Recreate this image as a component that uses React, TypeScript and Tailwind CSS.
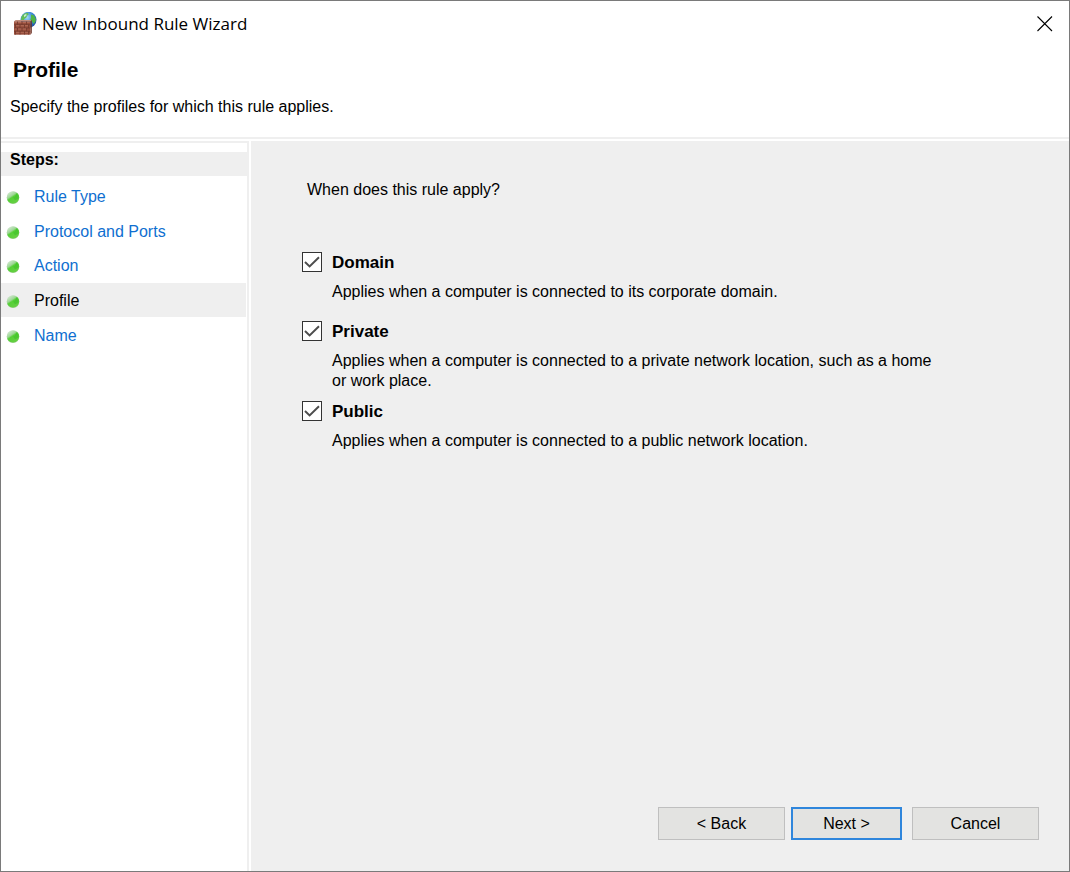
import { useState } from "react";

const steps = ["Rule Type", "Protocol and Ports", "Action", "Profile", "Name"];
const currentStep = "Profile";

const profiles = [
  {
    id: "domain",
    name: "Domain",
    description: "Applies when a computer is connected to its corporate domain.",
    spacing: "mb-[19px]",
  },
  {
    id: "private",
    name: "Private",
    description:
      "Applies when a computer is connected to a private network location, such as a home or work place.",
    spacing: "mb-[10px]",
  },
  {
    id: "public",
    name: "Public",
    description: "Applies when a computer is connected to a public network location.",
    spacing: "",
  },
];

function FirewallIcon() {
  return (
    <svg width="24" height="24" viewBox="0 0 24 24" aria-hidden="true">
      <defs>
        <radialGradient id="globe" cx="0.4" cy="0.35" r="0.7">
          <stop offset="0" stopColor="#a5dcf8" />
          <stop offset="0.55" stopColor="#3b8ad8" />
          <stop offset="1" stopColor="#1d4c9c" />
        </radialGradient>
      </defs>
      <circle cx="15.5" cy="7.8" r="8" fill="url(#globe)" />
      <path d="M8.4 5C9.6 2.4 12 1 14.5 0.8L15.8 2.2 14 3.8 13.4 5.4 11.5 6.8 10.5 8.4 8 8.4Z" fill="#62bf55" />
      <path d="M18 2.6L20.8 3.2 22.6 6.2 22.8 9 20.8 12 19 9.6 17.4 8 18 5.6Z" fill="#4fb545" />
      <path d="M11 3L13.4 1.8 13.4 3.8 11 5.2Z" fill="#c4ecd0" />
      <path d="M1 9.4L2.6 8H18.8L17.4 9.4Z" fill="#c18d7c" />
      <path d="M17.4 9.4L18.8 8V21L17.4 22.7Z" fill="#6a3226" />
      <rect x="1" y="9.4" width="16.4" height="13.3" fill="#984e3c" />
      <path
        d="M1 12.7H17.4M1 16H17.4M1 19.3H17.4M4.5 9.4V12.7M9 9.4V12.7M13.5 9.4V12.7M2.5 12.7V16M7 12.7V16M11.5 12.7V16M15.5 12.7V16M4.5 16V19.3M9 16V19.3M13.5 16V19.3M2.5 19.3V22.7M7 19.3V22.7M11.5 19.3V22.7M15.5 19.3V22.7"
        stroke="#6a3428"
        strokeWidth="0.6"
      />
      <path
        d="M1.5 10.4H4M5 10.4H8.5M9.6 10.4H13M14 10.4H16.8M3 13.7H6.5M7.6 13.7H11M12 13.7H15M1.5 17H4M5 17H8.5M9.6 17H13M3 20.3H6.5M7.6 20.3H11M12 20.3H15"
        stroke="#bd7a67"
        strokeWidth="0.7"
      />
    </svg>
  );
}

function StepBullet() {
  return (
    <svg width="14" height="14" viewBox="0 0 14 14" className="shrink-0" aria-hidden="true">
      <defs>
        <linearGradient id="bullet" x1="0.1" y1="0" x2="0.7" y2="0.9">
          <stop offset="0" stopColor="#dcefdc" />
          <stop offset="0.42" stopColor="#a0d698" />
          <stop offset="0.55" stopColor="#55d036" />
          <stop offset="1" stopColor="#66cf44" />
        </linearGradient>
      </defs>
      <circle cx="7" cy="7.8" r="6.3" fill="#b9c2b9" opacity="0.5" />
      <circle cx="7" cy="7.5" r="6.2" fill="url(#bullet)" />
      <path d="M7 7.6C9 7.2 10 5.6 10.4 3L12.6 5.8 12.4 8.8 9 10.2Z" fill="#3fc02c" opacity="0.6" />
    </svg>
  );
}

function WizardButton({ label, className }: { label: string; className: string }) {
  return (
    <button type="button" className={`h-[33px] bg-[#e3e3e1] text-base text-black ${className}`}>
      {label}
    </button>
  );
}

export default function App() {
  const [checked, setChecked] = useState<Record<string, boolean>>({
    domain: true,
    private: true,
    public: true,
  });

  return (
    <div className="flex min-h-screen flex-col border border-[#7a7a7a] bg-white font-['Liberation_Sans',Arial,sans-serif] text-base text-black">
      <header className="border-b-2 border-[#efefef]">
        <div className="flex h-[46px] items-center pr-4 pl-3">
          <FirewallIcon />
          <span className="ml-[5px] flex-1 font-['Open_Sans','Noto_Sans',sans-serif] text-[17px] leading-6">
            New Inbound Rule Wizard
          </span>
          <button type="button" aria-label="Close" className="flex size-4 items-center justify-center">
            <svg width="16" height="16" viewBox="0 0 16 16" aria-hidden="true">
              <path d="M0.5 0.5L15 15M15 0.5L0.5 15" stroke="#000" strokeWidth="1.1" />
            </svg>
          </button>
        </div>
        <h1 className="pt-[11px] pl-3 text-[21px] leading-6 font-bold">Profile</h1>
        <p className="pt-[15px] pb-5 pl-[9px] leading-5">Specify the profiles for which this rule applies.</p>
      </header>

      <div className="flex flex-1 gap-[2px] pt-[2px]">
        <nav aria-label="Steps" className="w-[248px] shrink-0 border-t-2 border-r-2 border-[#efefef]">
          <h2 className="mt-[9px] flex h-6 items-center bg-[#efefef] pb-2 pl-[9px] font-bold">Steps:</h2>
          <ul className="mt-[3px] grid h-[173px] grid-rows-5">
            {steps.map((step) => {
              const active = step === currentStep;
              return (
                <li key={step} className={active ? "mr-px flex bg-[#efefef]" : "mr-px flex"}>
                  <a
                    href="#"
                    aria-current={active ? "step" : undefined}
                    className={`flex flex-1 items-center gap-[14px] pt-[2px] pl-[5px] ${active ? "text-black" : "text-[#0f6fd0]"}`}
                  >
                    <StepBullet />
                    {step}
                  </a>
                </li>
              );
            })}
          </ul>
        </nav>

        <main className="flex flex-1 flex-col bg-[#efefef] pr-[30px] pb-[31px]">
          <p id="question" className="pt-[39px] pl-14 leading-5">
            When does this rule apply?
          </p>
          <div role="group" aria-labelledby="question" className="mt-[52px] max-w-[691px] flex-1 pl-[51px]">
            {profiles.map((profile) => (
              <div key={profile.id} className={profile.spacing}>
                <div className="flex h-5 items-center gap-[10px]">
                  <span className="relative flex size-5 shrink-0">
                    <input
                      type="checkbox"
                      id={profile.id}
                      checked={checked[profile.id]}
                      onChange={(e) => setChecked({ ...checked, [profile.id]: e.target.checked })}
                      className="peer size-5 appearance-none border border-[#333333] bg-white"
                    />
                    <svg
                      viewBox="0 0 20 20"
                      className="pointer-events-none absolute inset-0 hidden size-5 peer-checked:block"
                      aria-hidden="true"
                    >
                      <path d="M3 10L7.6 14.4L17 5.2" fill="none" stroke="#4d4d4d" strokeWidth="2" />
                    </svg>
                  </span>
                  <label htmlFor={profile.id} className="pt-[2px] text-[17px] leading-5 font-bold">
                    {profile.name}
                  </label>
                </div>
                <p className="mt-[10px] pl-[30px] leading-5">{profile.description}</p>
              </div>
            ))}
          </div>
          <div className="flex justify-end">
            <WizardButton label="< Back" className="mr-[6px] w-[127px] border border-[#bfbfbf]" />
            <WizardButton label="Next >" className="mr-[10px] w-[111px] border-2 border-[#2f86dc]" />
            <WizardButton label="Cancel" className="w-[127px] border border-[#bfbfbf]" />
          </div>
        </main>
      </div>
    </div>
  );
}
